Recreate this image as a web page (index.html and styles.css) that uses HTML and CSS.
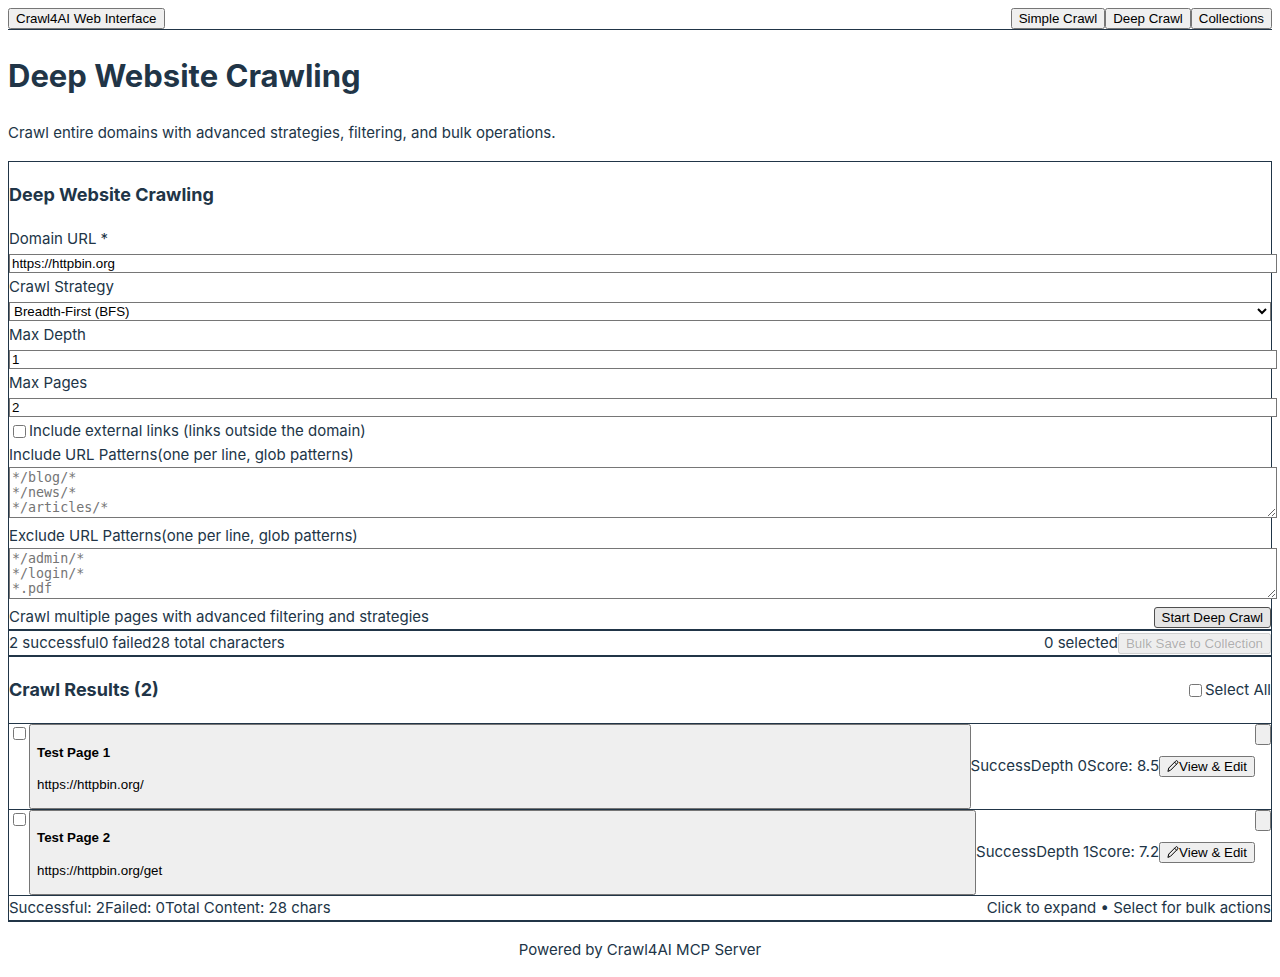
FILE: index.html
```html
<!DOCTYPE html>
<html lang="en">
<head>
<meta charset="utf-8">
<meta name="viewport" content="width=device-width, initial-scale=1">
<title>Crawl4AI Web Interface</title>
<link rel="stylesheet" href="styles.css">
</head>
<body>
<header class="topbar">
  <button type="button">Crawl4AI Web Interface</button>
  <nav class="nav">
    <button type="button">Simple Crawl</button>
    <button type="button">Deep Crawl</button>
    <button type="button">Collections</button>
  </nav>
</header>
<main>
  <h1>Deep Website Crawling</h1>
  <p>Crawl entire domains with advanced strategies, filtering, and bulk operations.</p>

  <form class="panel">
    <h3>Deep Website Crawling</h3>
    <div><label class="label" for="domain">Domain URL *</label><input class="field" id="domain" type="text" value="https://httpbin.org"></div>
    <div><label class="label" for="strategy">Crawl Strategy</label><select class="select" id="strategy"><option>Breadth-First (BFS)</option></select></div>
    <div><label class="label" for="depth">Max Depth</label><input class="field" id="depth" type="number" value="1"></div>
    <div><label class="label" for="pages">Max Pages</label><input class="field" id="pages" type="number" value="2"></div>
    <label class="check"><input type="checkbox"><span>Include external links (links outside the domain)</span></label>
    <div><label class="label" for="include">Include URL Patterns<span>(one per line, glob patterns)</span></label><textarea class="field" id="include" rows="3" placeholder="*/blog/*
*/news/*
*/articles/*"></textarea></div>
    <div><label class="label" for="exclude">Exclude URL Patterns<span>(one per line, glob patterns)</span></label><textarea class="field" id="exclude" rows="3" placeholder="*/admin/*
*/login/*
*.pdf"></textarea></div>
    <div class="bar">
      <span>Crawl multiple pages with advanced filtering and strategies</span>
      <button class="start" type="button">Start Deep Crawl</button>
    </div>
  </form>

  <section class="panel bar">
    <div class="group"><span>2 successful</span><span>0 failed</span><span>28 total characters</span></div>
    <div class="group"><span>0 selected</span><button type="button" disabled>Bulk Save to Collection</button></div>
  </section>

  <section class="panel">
    <div class="bar ruled">
      <h3>Crawl Results (2)</h3>
      <label class="check"><input type="checkbox"><span>Select All</span></label>
    </div>
    <article class="item ruled">
      <input type="checkbox" aria-label="Select Test Page 1">
      <button class="page" type="button"><h4>Test Page 1</h4><p>https://httpbin.org/</p></button>
      <div class="group">
        <span>Success</span><span>Depth 0</span><span>Score: 8.5</span>
        <button class="edit" type="button"><svg class="icon" viewBox="0 0 12 12" aria-hidden="true"><path d="M1 11l.8-3L8.6 1.2a1.2 1.2 0 0 1 1.9 0 1.4 1.4 0 0 1 0 2L3.8 10zM7.6 2.2l1.9 1.9"/></svg>View &amp; Edit</button>
      </div>
      <button class="expand" type="button" aria-label="Expand Test Page 1"></button>
    </article>
    <article class="item ruled">
      <input type="checkbox" aria-label="Select Test Page 2">
      <button class="page" type="button"><h4>Test Page 2</h4><p>https://httpbin.org/get</p></button>
      <div class="group">
        <span>Success</span><span>Depth 1</span><span>Score: 7.2</span>
        <button class="edit" type="button"><svg class="icon" viewBox="0 0 12 12" aria-hidden="true"><path d="M1 11l.8-3L8.6 1.2a1.2 1.2 0 0 1 1.9 0 1.4 1.4 0 0 1 0 2L3.8 10zM7.6 2.2l1.9 1.9"/></svg>View &amp; Edit</button>
      </div>
      <button class="expand" type="button" aria-label="Expand Test Page 2"></button>
    </article>
    <div class="bar ruled">
      <div class="group"><span>Successful: 2</span><span>Failed: 0</span><span>Total Content: 28 chars</span></div>
      <span>Click to expand • Select for bulk actions</span>
    </div>
  </section>
</main>
<footer class="footer"><p>Powered by Crawl4AI MCP Server</p></footer>
</body>
</html>
```
FILE: styles.css
```css
body {
  margin: 0;
  padding: 8px;
  color: #213547;
  background: #fff;
  font-family: Inter, sans-serif;
  font-size: 15px;
  line-height: 24px;
}

h1 {
  margin: 22px 0 21px;
  font-size: 31px;
  line-height: 48px;
}

h3 {
  margin: 19px 0 18px;
  font-size: 18px;
  line-height: 28px;
}

p {
  margin: 16px 0;
}

button,
input,
select {
  font-family: "Liberation Sans", Arial, sans-serif;
}

.topbar,
.bar {
  display: flex;
  align-items: center;
  justify-content: space-between;
}

.topbar,
.ruled {
  border-bottom: 1px solid #213547;
}

.bar h3 {
  margin: 19px 0;
}

.nav,
.group,
.check {
  display: flex;
  align-items: center;
}

.panel {
  border: 1px solid #213547;
}

.label {
  display: block;
}

.field {
  width: 100%;
  border: 1px solid #767676;
  padding: 1px 2px;
}

.select {
  width: 100%;
  border: 1px solid #767676;
  border-radius: 0;
  background: #fff;
}

textarea.field {
  display: block;
  margin-bottom: 6px;
  padding: 2px;
  font-family: "DejaVu Sans Mono", monospace;
}

textarea::placeholder {
  color: #757575;
}

.start {
  background: #e5e5e5;
  border: 1px solid #4f4f4f;
  border-radius: 3px;
  padding: 2px 7px;
}

.item {
  display: flex;
  align-items: flex-start;
}

.item .group {
  align-self: center;
}

.page {
  flex: 1;
  text-align: left;
}

.page p {
  margin: 1em 0;
}

.page h4,
.page p {
  line-height: 15px;
}

.edit {
  display: flex;
  align-items: center;
}

.icon {
  width: 12px;
  height: 12px;
  fill: none;
  stroke: currentColor;
  stroke-width: 1;
  stroke-linecap: round;
  stroke-linejoin: round;
}

.expand {
  min-height: 21px;
}

.footer {
  text-align: center;
}
```
